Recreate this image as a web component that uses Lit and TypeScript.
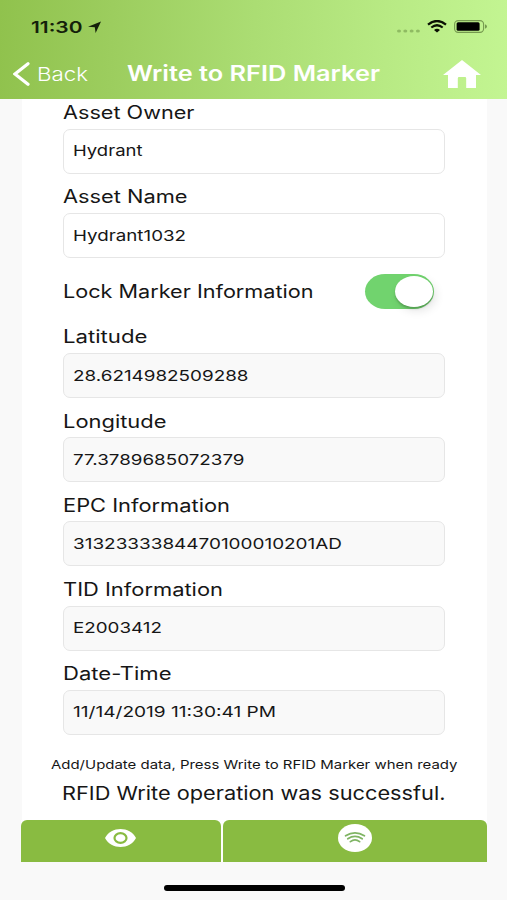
import { LitElement, html, css, svg } from "lit";
import { customElement, property } from "lit/decorators.js";

/** Text in a wide face: the line is stretched horizontally to the given width. */
@customElement("wide-text")
class WideText extends LitElement {
  @property({ type: Number }) width = 100;
  static styles = css`
    :host { display: block; white-space: nowrap; }
    .line { display: inline-block; transform-origin: 0 50%; }
  `;
  render() {
    return html`<span class="line"><slot></slot></span>`;
  }
  firstUpdated() {
    this.style.width = `${this.width}px`;
    const line = this.renderRoot.querySelector(".line") as HTMLElement;
    const natural = line.getBoundingClientRect().width;
    if (natural > 0) line.style.transform = `scaleX(${this.width / natural})`;
  }
}

interface Field {
  label: string;
  labelWidth: number;
  value: string;
  valueWidth: number;
}

const editable: Field[] = [
  { label: "Asset Owner", labelWidth: 131.5, value: "Hydrant", valueWidth: 69.5 },
  { label: "Asset Name", labelWidth: 124.5, value: "Hydrant1032", valueWidth: 113 },
];

const readonlyFields: Field[] = [
  { label: "Latitude", labelWidth: 84.5, value: "28.6214982509288", valueWidth: 175.5 },
  { label: "Longitude", labelWidth: 103.5, value: "77.3789685072379", valueWidth: 171.5 },
  { label: "EPC Information", labelWidth: 167, value: "3132333384470100010201AD", valueWidth: 269 },
  { label: "TID Information", labelWidth: 160, value: "E2003412", valueWidth: 89 },
  { label: "Date-Time", labelWidth: 108.5, value: "11/14/2019 11:30:41 PM", valueWidth: 203 },
];

@customElement("app-root")
class AppRoot extends LitElement {
  static styles = css`
    :host {
      display: flex;
      flex-direction: column;
      box-sizing: border-box;
      width: 507px;
      height: 900px;
      overflow: hidden;
      background: #f9f9f9;
      font-family: Inter, "Liberation Sans", sans-serif;
      color: #161616;
    }
    svg { display: block; }
    .header {
      flex: none;
      height: 99px;
      background: linear-gradient(92deg, #90c24d 0%, #9ccd5e 22%, #abdd73 50%, #b8ea84 76%, #c3f592 100%);
    }
    .status {
      display: flex;
      align-items: center;
      height: 53px;
      padding: 0 19px 0 31px;
    }
    .time { font-size: 16px; font-weight: 600; color: #14200a; }
    .arrow { margin-left: 5px; }
    .status-icons { margin-left: auto; display: flex; align-items: center; }
    .dots { margin: 9px 7px 0 0; }
    .battery { margin-left: 7px; }
    .nav {
      display: flex;
      align-items: center;
      height: 42px;
      padding: 0 26px 0 13px;
      color: #fff;
    }
    .back { font-size: 18.5px; font-weight: 300; margin-left: 7px; }
    .title { font-size: 21px; font-weight: 600; margin-left: 38.5px; line-height: 40px; margin-top: -1px; }
    .home { margin-left: auto; margin-top: -1px; }
    .card {
      flex: none;
      box-sizing: border-box;
      width: 465px;
      height: 721px;
      margin-left: 21.5px;
      padding: 0 42px 0 41px;
      background: #fff;
      overflow: hidden;
    }
    .field { height: 84.2px; }
    .label { font-size: 18px; line-height: 27.5px; height: 29.6px; }
    .input {
      box-sizing: border-box;
      display: flex;
      align-items: center;
      width: 382.5px;
      height: 45px;
      padding: 0 0 0.5px 9px;
      border: 1px solid #e6e6e6;
      border-radius: 7px;
      font-size: 15px;
      background: #fff;
    }
    .readonly .input { background: #f9f9f9; }
    .lock {
      box-sizing: border-box;
      display: flex;
      align-items: center;
      justify-content: space-between;
      height: 56px;
      padding: 0 10.5px 8.5px 0.5px;
      font-size: 18px;
    }
    .toggle {
      box-sizing: border-box;
      display: flex;
      justify-content: flex-end;
      width: 69px;
      height: 35px;
      padding: 2px 1.5px;
      border-radius: 20px / 17.5px;
      background: #71d36e;
    }
    .knob {
      width: 38px;
      height: 31px;
      border-radius: 50%;
      background: #fff;
      box-shadow: 0 2px 2px rgba(0, 0, 0, 0.18), 3px 4px 10px rgba(0, 0, 0, 0.1);
    }
    .hint { font-size: 12px; line-height: 16px; margin: 13px 0 0 -11.5px; }
    .result { font-size: 18.5px; line-height: 26px; margin-top: 7px; margin-left: -0.5px; }
    .actions {
      flex: none;
      display: flex;
      gap: 2px;
      width: 466px;
      height: 42px;
      margin-left: 21px;
      background: #fff;
    }
    .action {
      display: flex;
      justify-content: center;
      background: #89bb41;
      border-radius: 6px 6px 0 0;
    }
    .view { width: 199.5px; }
    .write { flex: 1; }
    .view svg { margin-top: 9px; }
    .write svg { margin-top: 4px; }
    .home-bar {
      width: 181px;
      height: 6px;
      border-radius: 3px;
      background: #000;
      margin: 23px 0 0 163.5px;
    }
  `;

  private renderField(f: Field) {
    return html`<div class="field">
      <wide-text class="label" .width=${f.labelWidth}>${f.label}</wide-text>
      <div class="input"><wide-text .width=${f.valueWidth}>${f.value}</wide-text></div>
    </div>`;
  }

  render() {
    return html`
      <div class="header">
        <div class="status">
          <wide-text class="time" .width=${51.5}>11:30</wide-text>
          <svg class="arrow" width="13" height="12" viewBox="0 0 13 12"><path d="M13 0.5 7.6 12 6.8 6.3 0 5.8z" fill="#14200a"/></svg>
          <div class="status-icons">
            <svg class="dots" width="23" height="4" viewBox="0 0 23 4" fill="#8fbb62">
              ${[2, 8.3, 14.6, 20.9].map((x) => svg`<ellipse cx=${x} cy="2" rx="2" ry="1.6"/>`)}
            </svg>
            <svg width="20" height="13" viewBox="0 0 20 13" fill="none" stroke="#0a1004">
              <path d="M1 4.6Q10-2.6 19 4.6" stroke-width="2.3"/>
              <path d="M4.3 7.5Q10 3 15.7 7.5" stroke-width="2.2"/>
              <path d="M7 9.9Q10 7.8 13 9.9L10 12.6z" fill="#0a1004" stroke="none"/>
            </svg>
            <svg class="battery" width="34" height="13" viewBox="0 0 34 13">
              <rect x="0.6" y="0.6" width="29" height="11.8" rx="3.6" fill="none" stroke="#75994f" stroke-width="1.1"/>
              <rect x="2.6" y="2.3" width="23" height="8.4" rx="1.5" fill="#000"/>
              <path d="M31 4.3Q33 5 33 6.5T31 8.7z" fill="#75994f"/>
            </svg>
          </div>
        </div>
        <div class="nav">
          <svg width="17" height="24" viewBox="0 0 17 24"><path d="M15 1.8 2 12 15 22.2" fill="none" stroke="#fff" stroke-width="3.2" stroke-linecap="round"/></svg>
          <wide-text class="back" .width=${51}>Back</wide-text>
          <wide-text class="title" .width=${253}>Write to RFID Marker</wide-text>
          <svg class="home" width="38" height="28" viewBox="0 0 38 28"><path d="M19 0 0 15H5V28H14.8V18.2Q14.8 17 16 17H22Q23.2 17 23.2 18.2V28H33V15H38z" fill="#fff"/></svg>
        </div>
      </div>
      <div class="card">
        ${editable.map((f) => this.renderField(f))}
        <div class="lock">
          <wide-text .width=${250.5}>Lock Marker Information</wide-text>
          <div class="toggle"><div class="knob"></div></div>
        </div>
        <div class="readonly">${readonlyFields.map((f) => this.renderField(f))}</div>
        <wide-text class="hint" .width=${406.5}>Add/Update data, Press Write to RFID Marker when ready</wide-text>
        <wide-text class="result" .width=${383.5}>RFID Write operation was successful.</wide-text>
      </div>
      <div class="actions">
        <div class="action view">
          <svg width="31" height="18" viewBox="0 0 31 18">
            <path d="M0 9C6-3 25-3 31 9 25 21 6 21 0 9z" fill="#fff"/>
            <ellipse cx="15.5" cy="9" rx="6" ry="4.9" fill="#fff" stroke="#89bb41" stroke-width="2.2"/>
          </svg>
        </div>
        <div class="action write">
          <svg width="34" height="28" viewBox="0 0 34 28">
            <ellipse cx="17" cy="14" rx="17" ry="14" fill="#fff"/>
            <g fill="none" stroke="#7fb463" stroke-width="1.8" stroke-linecap="round">
              <path d="M7.6 11.8Q17 6 26.4 11.8"/>
              <path d="M9.8 14.7Q17 10.2 24.2 14.7"/>
              <path d="M12.4 17.6Q17 14.2 21.6 17.6"/>
            </g>
          </svg>
        </div>
      </div>
      <div class="home-bar"></div>
    `;
  }
}
